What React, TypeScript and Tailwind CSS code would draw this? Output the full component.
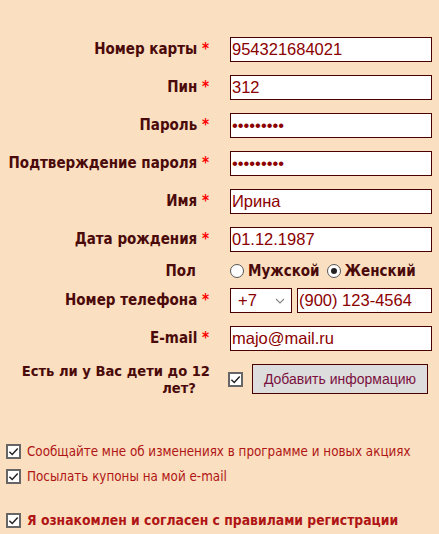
import React from "react";

const LABEL = "font-['DejaVu_Sans_Condensed','DejaVu_Sans',sans-serif] font-bold text-[15px] text-[#4a0a0a]";
const INPUT =
  "h-[25px] w-[202px] border border-[#4a0000] bg-white px-[1px] font-['Liberation_Sans',Arial,sans-serif] text-[16.5px] text-[#8b0000] outline-none";

function Check() {
  return (
    <span className="flex h-[15px] w-[15px] shrink-0 items-center justify-center border-2 border-[#666] bg-white">
      <svg viewBox="0 0 12 12" className="h-[11px] w-[11px]">
        <path d="M1.5 6.2 L4.6 9.2 L10.6 2.6" fill="none" stroke="#222" strokeWidth="1.6" />
      </svg>
    </span>
  );
}

function Radio({ on }: { on?: boolean }) {
  return (
    <span className="flex h-[14px] w-[14px] shrink-0 items-center justify-center rounded-full border border-[#555] bg-white">
      {on && <span className="h-[6px] w-[6px] rounded-full bg-[#222]" />}
    </span>
  );
}

function Row({ label, req = true, children, className = "" }: { label: string; req?: boolean; children: React.ReactNode; className?: string }) {
  return (
    <div className={"flex items-center " + className}>
      <div className={"w-[209px] shrink-0 text-right " + LABEL}>
        {label}
        {req ? <span className="text-[#ff0000]"> *</span> : <span className="inline-block w-[13px]" />}
      </div>
      <div className="ml-[21px] flex items-center">{children}</div>
    </div>
  );
}

export default function App() {
  return (
    <div className="h-[534px] w-[439px] overflow-hidden bg-[#fadfc0]">
      <form className="flex flex-col pt-[37px]">
        <Row label="Номер карты">
          <input className={INPUT} defaultValue="954321684021" />
        </Row>
        <Row label="Пин" className="mt-[13px]">
          <input className={INPUT} defaultValue="312" />
        </Row>
        <Row label="Пароль" className="mt-[13px]">
          <input type="password" className={INPUT} defaultValue="123456789" />
        </Row>
        <Row label="Подтверждение пароля" className="mt-[13px]">
          <input type="password" className={INPUT} defaultValue="123456789" />
        </Row>
        <Row label="Имя" className="mt-[13px]">
          <input className={INPUT} defaultValue="Ирина" />
        </Row>
        <Row label="Дата рождения" className="mt-[13px]">
          <input className={INPUT} defaultValue="01.12.1987" />
        </Row>
        <Row label="Пол" req={false} className="mt-[8px] h-[22px]">
          <label className={"flex items-center gap-[4px] " + LABEL}>
            <Radio />
            Мужской
          </label>
          <label className={"ml-[7px] flex items-center gap-[4px] " + LABEL}>
            <Radio on />
            Женский
          </label>
        </Row>
        <Row label="Номер телефона" className="mt-[6px]">
          <div className="flex h-[25px] w-[62px] items-center justify-between border border-[#4a0000] bg-white pl-[7px] pr-[6px] font-['Liberation_Sans',Arial,sans-serif] text-[16.5px] text-[#8b0000]">
            +7
            <svg viewBox="0 0 10 6" className="h-[6px] w-[10px]">
              <path d="M1 1 L5 5 L9 1" fill="none" stroke="#888" strokeWidth="1.2" />
            </svg>
          </div>
          <input className={INPUT + " ml-[5px] !w-[135px]"} defaultValue="(900) 123-4564" />
        </Row>
        <Row label="E-mail" className="mt-[13px]">
          <input className={INPUT} defaultValue="majo@mail.ru" />
        </Row>
        <div className="mt-[11px] flex items-center">
          <div className={"w-[210px] shrink-0 text-right leading-[17px] " + LABEL + " !text-[14.6px]"}>
            <div>Есть ли у Вас дети до 12</div>
            <div className="pr-[14px]">лет?</div>
          </div>
          <div className="ml-[18px]">
            <Check />
          </div>
          <button
            type="button"
            className="ml-[9px] h-[30px] w-[176px] border border-[#4a0000] bg-[#dddddd] font-['Liberation_Sans',Arial,sans-serif] text-[14px] text-[#7a1040]"
          >
            Добавить информацию
          </button>
        </div>

        <div className="mt-[48px] flex flex-col pl-[6px] font-['DejaVu_Sans_Condensed','DejaVu_Sans',sans-serif] text-[13.3px] text-[#b01515]">
          <label className="flex h-[15px] items-center gap-[6px]">
            <Check />
            Сообщайте мне об изменениях в программе и новых акциях
          </label>
          <label className="mt-[10px] flex h-[15px] items-center gap-[6px]">
            <Check />
            Посылать купоны на мой e-mail
          </label>
          <label className="mt-[29px] flex h-[15px] items-center gap-[6px] text-[13.8px] font-bold">
            <Check />
            Я ознакомлен и согласен с правилами регистрации
          </label>
        </div>
      </form>
    </div>
  );
}
